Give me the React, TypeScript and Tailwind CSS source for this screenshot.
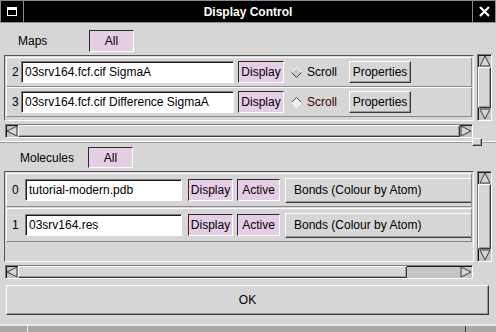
import React from "react";

const raised =
  "border border-t-white border-l-white border-r-[#3a3a3a] border-b-[#3a3a3a] shadow-[inset_-1px_-1px_0_#9a9a9a]";
const pressed =
  "border border-t-[#2a2a2a] border-l-[#2a2a2a] border-r-white border-b-white bg-[#e6cde6]";
const sunken =
  "border border-t-[#7c7c7c] border-l-[#7c7c7c] border-r-white border-b-white shadow-[inset_1px_1px_0_#1a1a1a]";

type Dir = "up" | "down" | "left" | "right";

const Arrow = ({ dir }: { dir: Dir }) => {
  const pts = {
    up: "6,1 11,11 1,11",
    down: "1,1 11,1 6,11",
    left: "1,6 11,1 11,11",
    right: "1,1 11,6 1,11",
  }[dir];
  return (
    <svg width="12" height="12" viewBox="0 0 12 12" className="block">
      <polygon points={pts} fill="#d6d6d6" stroke="#3a3a3a" strokeWidth="1" />
    </svg>
  );
};

const Diamond = ({ on }: { on?: boolean }) => (
  <svg width="11" height="11" viewBox="0 0 11 11" className="block">
    <polygon points="5.5,0.5 10.5,5.5 5.5,10.5 0.5,5.5" fill={on ? "#f4eef4" : "#c8c8c8"} />
    <polyline points="0.5,5.5 5.5,0.5 10.5,5.5" fill="none" stroke={on ? "#5a3a5a" : "#ffffff"} />
    <polyline points="0.5,5.5 5.5,10.5 10.5,5.5" fill="none" stroke={on ? "#ffffff" : "#444444"} />
  </svg>
);

const HScroll = ({ thumb }: { thumb: number }) => (
  <div className={`ml-[1px] w-[468px] h-[14px] flex bg-[#c4c4c4] ${sunken}`}>
    <div className="w-[12px] h-full flex items-center justify-center">
      <Arrow dir="left" />
    </div>
    <div className="flex-1 flex">
      <div className={`h-full bg-[#d6d6d6] ${raised}`} style={{ width: thumb }} />
    </div>
    <div className="w-[12px] h-full flex items-center justify-center">
      <Arrow dir="right" />
    </div>
  </div>
);

const VScroll = ({ h }: { h: string }) => (
  <div className={`w-[15px] ${h} flex flex-col bg-[#c4c4c4] ${sunken}`}>
    <div className="h-[12px] flex items-center justify-center">
      <Arrow dir="up" />
    </div>
    <div className={`flex-1 bg-[#d6d6d6] ${raised}`} />
    <div className="h-[12px] flex items-center justify-center">
      <Arrow dir="down" />
    </div>
  </div>
);

const MapRow = ({ n, name, on }: { n: string; name: string; on?: boolean }) => (
  <div className={`h-[30px] flex items-center ${raised} shadow-none border-r-[#8a8a8a] border-b-[#8a8a8a]`}>
    <span className="w-[14px] shrink-0 pl-[5px]">{n}</span>
    <div className={`w-[213px] shrink-0 h-[22px] bg-white flex items-center pl-[3px] ${sunken}`}>{name}</div>
    <div className={`ml-[4px] shrink-0 w-[46px] h-[22px] flex items-center justify-center ${pressed}`}>Display</div>
    <div className="w-[65px] shrink-0 flex items-center pl-[7px] gap-[5px]">
      <Diamond on={on} />
      <span className={on ? "text-[#400000]" : ""}>Scroll</span>
    </div>
    <div className={`w-[62px] shrink-0 h-[22px] flex items-center justify-center ${raised}`}>Properties</div>
  </div>
);

const MolRow = ({ n, name }: { n: string; name: string }) => (
  <div className={`h-[34px] mb-[1px] flex items-center overflow-hidden ${raised} shadow-none border-r-[#8a8a8a] border-b-[#8a8a8a]`}>
    <span className="w-[18px] shrink-0 pl-[5px]">{n}</span>
    <div className={`w-[157px] shrink-0 h-[22px] bg-white flex items-center pl-[3px] ${sunken}`}>{name}</div>
    <div className={`ml-[6px] shrink-0 w-[45px] h-[22px] flex items-center justify-center ${pressed}`}>Display</div>
    <div className={`ml-[4px] shrink-0 w-[43px] h-[22px] flex items-center justify-center ${pressed}`}>Active</div>
    <div className={`ml-[5px] shrink-0 w-[220px] h-[25px] flex items-center pl-[8px] ${raised}`}>
      Bonds (Colour by Atom)
    </div>
  </div>
);

export default function App() {
  return (
    <div className="w-[496px] h-[332px] overflow-hidden bg-[#d6d6d6] flex flex-col font-['Liberation_Sans',Arial,sans-serif] text-[12px] text-black">
      {/* title bar */}
      <div className="h-[23px] shrink-0 flex bg-black border border-[#8c8c8c]">
        <div className="w-[23px] border-r border-[#8c8c8c] flex items-center justify-center">
          <div className="w-[10px] h-[9px] border border-white border-t-[3px]" />
        </div>
        <div className="flex-1 flex items-center justify-center text-white font-bold text-[12px]">
          Display Control
        </div>
        <div className="w-[23px] border-l border-[#8c8c8c] flex items-center justify-center">
          <svg width="11" height="11" viewBox="0 0 11 11">
            <path d="M1 1 L10 10 M10 1 L1 10" stroke="white" strokeWidth="2.2" />
          </svg>
        </div>
      </div>

      {/* maps header */}
      <div className="h-[32px] shrink-0 flex items-start">
        <div className="mt-[7px] h-[22px] flex items-center">
          <span className="w-[89px] pl-[18px]">Maps</span>
          <div className={`w-[45px] h-[22px] flex items-center justify-center ${pressed}`}>All</div>
        </div>
      </div>

      {/* maps list */}
      <div className="flex shrink-0">
        <div className="ml-[4px] w-[470px] flex flex-col">
          <div className="h-[66px] px-[1px] pt-[1px] overflow-hidden border border-t-[#555] border-l-[#555] border-r-white border-b-white">
            <MapRow n="2" name="03srv164.fcf.cif SigmaA" />
            <MapRow n="3" name="03srv164.fcf.cif Difference SigmaA" on />
          </div>
          <div className="mt-[3px]">
            <HScroll thumb={442} />
          </div>
        </div>
        <div className="ml-[3px] -mt-[1px]">
          <VScroll h="h-[67px]" />
        </div>
      </div>

      {/* pane separator */}
      <div className="h-[8px] shrink-0 flex items-center">
        <div className="w-[472px] h-[2px] border-t border-white border-b border-b-[#9a9a9a]" />
        <div className={`w-[10px] h-[8px] bg-[#d6d6d6] ${raised}`} />
        <div className="flex-1 h-[2px] border-t border-white border-b border-b-[#9a9a9a]" />
      </div>

      {/* molecules header */}
      <div className="h-[25px] shrink-0 flex items-start">
        <div className="mt-[1px] h-[21px] flex items-center">
          <span className="w-[88px] pl-[20px]">Molecules</span>
          <div className={`w-[45px] h-[21px] flex items-center justify-center ${pressed}`}>All</div>
        </div>
      </div>

      {/* molecules list */}
      <div className="flex shrink-0">
        <div className="ml-[4px] w-[470px] flex flex-col">
          <div className="h-[91px] px-[1px] pt-[1px] overflow-hidden border border-t-[#555] border-l-[#555] border-r-white border-b-white">
            <MolRow n="0" name="tutorial-modern.pdb" />
            <MolRow n="1" name="03srv164.res" />
          </div>
          <div className="mt-[3px]">
            <HScroll thumb={389} />
          </div>
        </div>
        <div className="ml-[3px]">
          <VScroll h="h-[91px]" />
        </div>
      </div>

      {/* ok */}
      <div className={`mt-[6px] ml-[6px] w-[483px] h-[30px] shrink-0 flex items-center justify-center ${raised}`}>
        OK
      </div>

      {/* strip of window below */}
      <div className="mt-[9px] flex-1 flex bg-[#a9a9a9] border-t-2 border-[#e8e8e8]">
        <div className="w-[28px] border-r border-[#efefef]" />
        <div className="w-[438px] border-r border-[#3a3a3a]" />
        <div className="flex-1" />
      </div>
    </div>
  );
}
